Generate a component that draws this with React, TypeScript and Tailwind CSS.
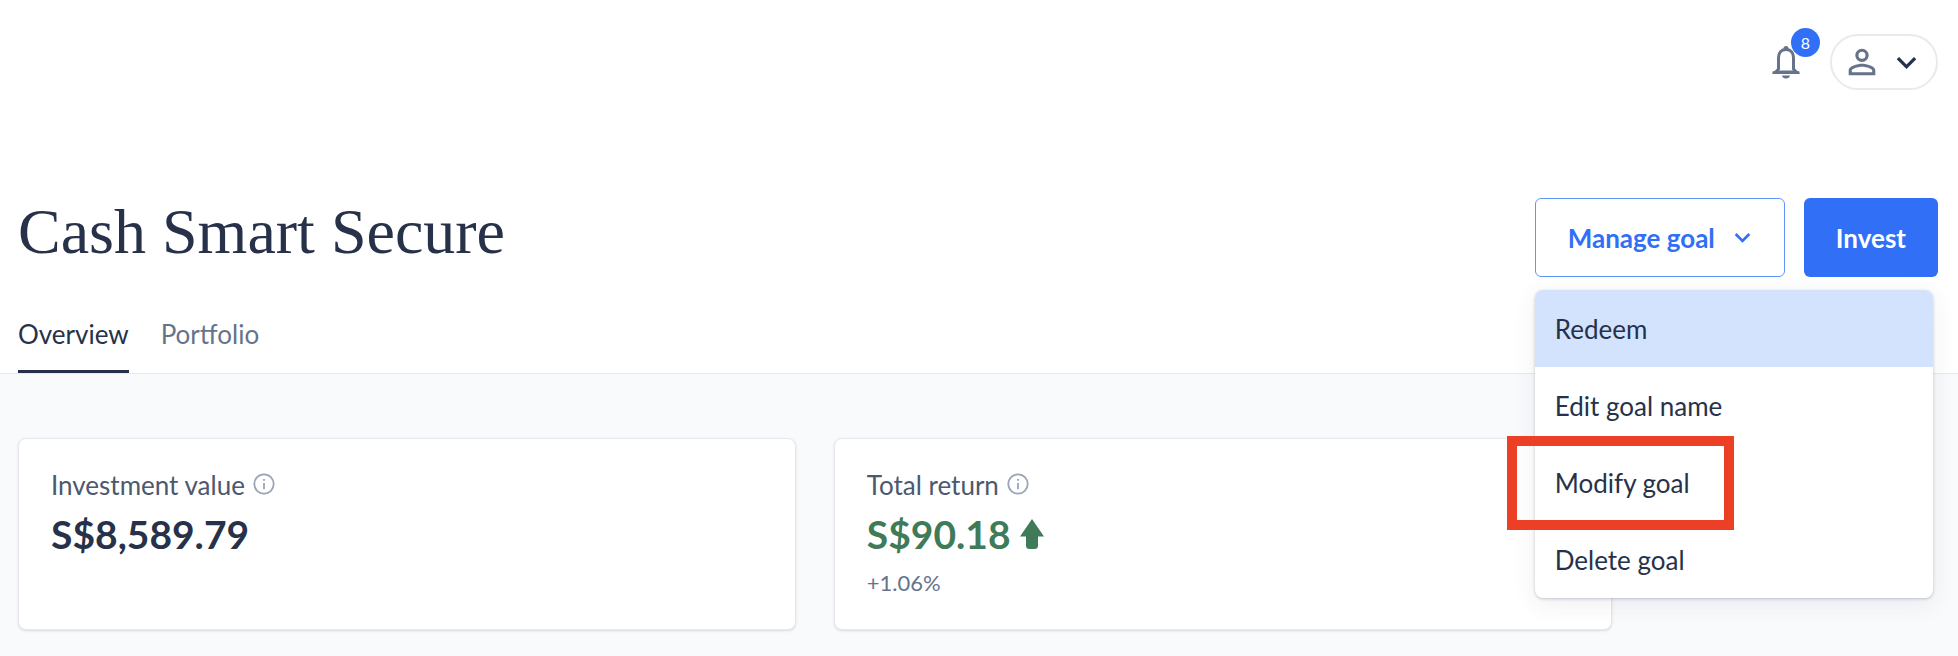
import { useState } from 'react';
import { MdExpandMore, MdPersonOutline } from 'react-icons/md';

const TABS = ['Overview', 'Portfolio'];
const ACTIONS = ['Redeem', 'Edit goal name', 'Modify goal', 'Delete goal'];

function BellIcon() {
  return (
    <svg width="28" height="40" viewBox="0 0 28 40" aria-hidden="true">
      <path d="M14 7.500C8.500 7.500 6.500 12 6.500 16V27L3.500 30.500H24.500L21.500 27V16C21.500 12 19.500 7.500 14 7.500Z" fill="none" stroke="currentColor" strokeWidth="3" />
      <path d="M11.500 7.500V6.500Q11.500 4 14 4T16.500 6.500V7.500ZM0.500 32V29.500L4 28.500H24L27.500 29.500V32ZM10 33.500H18Q17.500 36.500 14 36.500T10 33.500Z" fill="currentColor" />
    </svg>
  );
}

function InfoButton({ label }: { label: string }) {
  return (
    <button type="button" aria-label={`About ${label}`} className="text-[#9aa5b8]">
      <svg width="24" height="26" viewBox="0 0 24 26" aria-hidden="true">
        <circle cx="12" cy="12" r="9.700" fill="none" stroke="currentColor" strokeWidth="1.800" />
        <path d="M11.100 11H12.900V17.200H11.100ZM11.100 7H12.900V8.800H11.100Z" fill="currentColor" />
      </svg>
    </button>
  );
}

function UpArrow() {
  return (
    <svg width="24" height="30" viewBox="0 0 24 30" fill="currentColor" aria-hidden="true">
      <path d="M12 0 24 17.500H18V26.500Q18 30 14.500 30H9.500Q6 30 6 26.500V17.500H0Z" />
    </svg>
  );
}

export default function App() {
  const [tab, setTab] = useState('Overview');
  const [open, setOpen] = useState(true);
  const [active, setActive] = useState('Redeem');

  return (
    <div className="min-h-screen bg-[#f9fafc] font-['Lato',sans-serif] text-[26px] leading-8 text-[#27324a]">
      <header className="border-b border-[#e7e9ee] bg-white pr-5 pl-[18px] pt-[34px]">
        <div className="flex items-center justify-end gap-[30px]">
          <button type="button" aria-label="Notifications" className="relative text-[#66738b]">
            <BellIcon />
            <span className="absolute -top-[14px] -right-5 flex size-[29px] items-center justify-center rounded-full bg-[#3170f6] text-base text-white">
              8
            </span>
          </button>
          <button type="button" aria-label="Account" className="flex h-14 items-center gap-[5px] rounded-full border-2 border-[#e9eaef] px-[10px]">
            <MdPersonOutline size={40} className="text-[#66738b]" />
            <MdExpandMore size={39} />
          </button>
        </div>

        <div className="mt-[108px] flex items-center justify-between">
          <h1 className="pb-3 font-['Liberation_Serif',serif] text-[64px] leading-16">Cash Smart Secure</h1>
          <div className="flex gap-[19px] font-bold">
            <div className="relative">
              <button
                type="button"
                aria-expanded={open}
                onClick={() => setOpen(!open)}
                className="flex h-[79px] items-center gap-3 rounded-md border border-[#5f97f8] pr-[26px] pl-8 text-[#3170f6]"
              >
                Manage goal
                <MdExpandMore size={31} />
              </button>
              {open && (
                <ul className="absolute top-[92px] left-0 z-10 w-[398px] rounded-lg bg-white font-normal shadow-[0_1px_3px_rgba(39,50,74,0.25),0_6px_24px_rgba(39,50,74,0.08)]">
                  {ACTIONS.map(action => (
                    <li key={action} className="relative">
                      <button
                        type="button"
                        onClick={() => setActive(action)}
                        className={`h-[77px] w-full px-5 text-left first:rounded-t-lg ${active === action ? 'bg-[#d4e3fd]' : ''}`}
                      >
                        {action}
                      </button>
                      {action === 'Modify goal' && (
                        <span className="pointer-events-none absolute -top-2 -left-7 h-[94px] w-[227px] border-[10px] border-[#eb4026]" />
                      )}
                    </li>
                  ))}
                </ul>
              )}
            </div>
            <button type="button" className="h-[79px] rounded-md bg-[#3170f6] px-8 text-white">Invest</button>
          </div>
        </div>

        <nav className="mt-[41px] flex gap-8">
          {TABS.map(t => (
            <button
              key={t}
              type="button"
              onClick={() => setTab(t)}
              className={`border-b-[3px] pb-5 ${tab === t ? 'border-[#27324a]' : 'border-transparent text-[#66738b]'}`}
            >
              {t}
            </button>
          ))}
        </nav>
      </header>

      <main className="pt-16 pr-5 pb-6 pl-[18px]">
        <div className="grid w-[83%] grid-cols-2 gap-[38px]">
          <section className="h-48 rounded-lg border border-[#e7e9ee] bg-white px-8 pt-[30px] shadow-sm">
            <div className="flex items-center gap-[7px] text-[#4d586c]">
              Investment value
              <InfoButton label="Investment value" />
            </div>
            <p className="mt-[9px] text-[39px] leading-[48px] font-bold">S$8,589.79</p>
          </section>
          <section className="h-48 rounded-lg border border-[#e7e9ee] bg-white px-8 pt-[30px] shadow-sm">
            <div className="flex items-center gap-[7px] text-[#4d586c]">
              Total return
              <InfoButton label="Total return" />
            </div>
            <p className="mt-[9px] flex items-center gap-[9px] text-[39px] leading-[48px] font-bold text-[#3f7b58]">
              S$90.18
              <UpArrow />
            </p>
            <p className="mt-[9px] text-[22px] text-[#66738b]">+1.06%</p>
          </section>
        </div>
      </main>
    </div>
  );
}
